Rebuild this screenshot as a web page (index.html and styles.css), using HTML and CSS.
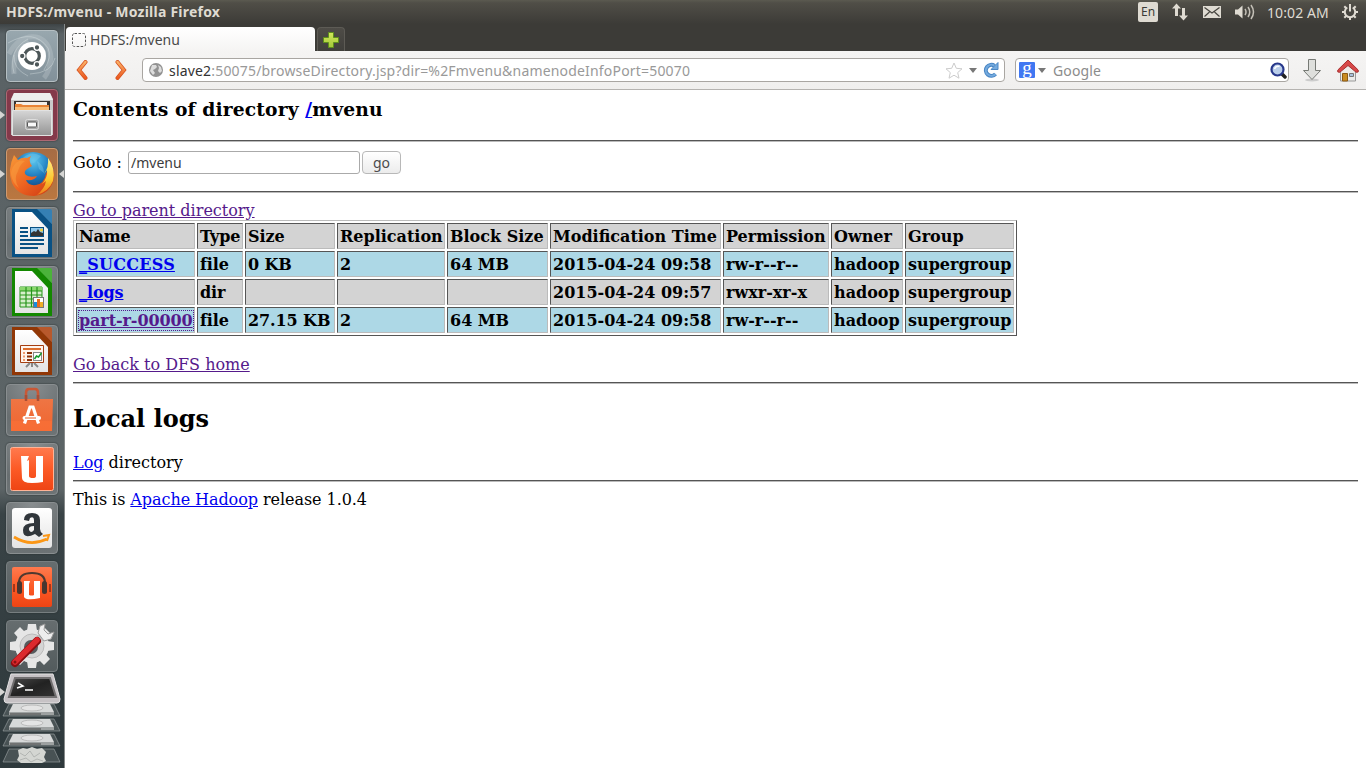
FILE: index.html
```html
<!DOCTYPE html>
<html lang="en">
<head>
<meta charset="utf-8">
<title>HDFS:/mvenu</title>
<link rel="stylesheet" href="styles.css">
</head>
<body>
<svg class="defs" width="0" height="0">
  <defs>
    <linearGradient id="orange" x1="0" y1="0" x2="0" y2="1"><stop offset="0" stop-color="#fbb066"/><stop offset="1" stop-color="#ec5a20"/></linearGradient>
    <linearGradient id="u1" x1="0" y1="0" x2="0" y2="1"><stop offset="0" stop-color="#ff7a4e"/><stop offset=".5" stop-color="#fc5a26"/><stop offset="1" stop-color="#ee4414"/></linearGradient>
    <linearGradient id="bag" x1="0" y1="0" x2="0" y2="1"><stop offset="0" stop-color="#ee7544"/><stop offset="1" stop-color="#f0652f"/></linearGradient>
    <linearGradient id="metal" x1="0" y1="0" x2="0" y2="1"><stop offset="0" stop-color="#d6d6d6"/><stop offset="1" stop-color="#949494"/></linearGradient>
    <linearGradient id="plus" x1="0" y1="0" x2="0" y2="1"><stop offset="0" stop-color="#d2e85a"/><stop offset="1" stop-color="#a2c63a"/></linearGradient>
    <linearGradient id="paper" x1="0" y1="0" x2="0" y2="1"><stop offset="0" stop-color="#fff"/><stop offset="1" stop-color="#e4e4e4"/></linearGradient>
    <radialGradient id="globe" cx=".5" cy=".2" r=".8"><stop offset="0" stop-color="#5cc8ee"/><stop offset=".5" stop-color="#1c78bd"/><stop offset="1" stop-color="#123468"/></radialGradient>
    <linearGradient id="fox" x1="0" y1="0" x2="1" y2="1"><stop offset="0" stop-color="#f79a38"/><stop offset=".5" stop-color="#ee6421"/><stop offset="1" stop-color="#c93512"/></linearGradient>
    <linearGradient id="tail" x1="0" y1="0" x2="0" y2="1"><stop offset="0" stop-color="#fff08a"/><stop offset=".6" stop-color="#fbc52c"/><stop offset="1" stop-color="#ee7a1e"/></linearGradient>
    <linearGradient id="screen" x1="0" y1="0" x2="1" y2="1"><stop offset="0" stop-color="#4a4a4a"/><stop offset=".5" stop-color="#222"/><stop offset="1" stop-color="#333"/></linearGradient>
  </defs>
</svg>
<header class="panel">
  <span class="panel-title">HDFS:/mvenu - Mozilla Firefox</span>
  <div class="indicators">
    <span class="lang">En</span>
    <svg class="ind-net" width="18" height="18" viewBox="0 0 18 18"><path d="M5.500.5L10 5.500H7V13H4V5.500H1z M12.500 17.500L8 12.500h3V5h3v7.500h3z" fill="#dfdbd2"/></svg>
    <svg class="ind-mail" width="18" height="12" viewBox="0 0 18 12"><rect width="18" height="12" fill="#dfdbd2"/><path d="M1.500 1.500L9 7l7.500-5.500M1.500 10.500L6.500 6M16.500 10.500L11.500 6" fill="none" stroke="#45433d" stroke-width="1.200"/></svg>
    <svg class="ind-vol" width="20" height="16" viewBox="0 0 20 16"><path d="M0 5.500h3L7.500 1.500v13L3 10.500H0z" fill="#dfdbd2"/><path d="M10 5q2 3 0 6M13 3q3.500 5 0 10M16 1q5 7 0 14" fill="none" stroke="#c4c0b7" stroke-width="1.500"/></svg>
    <span class="clock">10:02 AM</span>
    <svg class="ind-gear" width="16" height="16" viewBox="0 0 16 16" fill="none" stroke="#dfdbd2"><path d="M5.300 3.500A5.200 5.200 0 1 0 10.700 3.500" stroke-width="2"/><path d="M8 0v7.500" stroke-width="2"/><path d="M0 8h3M13 8h3M8 13v3M2.300 2.300l2 2M13.700 2.300l-2 2M2.300 13.700l2-2M13.700 13.700l-2-2" stroke-width="2"/></svg>
  </div>
</header>
<div class="desktop">
  <aside class="launcher">
    <div class="tile dash"><svg viewBox="0 0 52 52"><g fill="none" stroke="#cfd9dc" stroke-opacity=".28" stroke-width="5"><path d="M3 24Q13 5 30 7Q43 10 45 27Q44 41 38 48M8 44Q6 18 22 10"/></g><g fill="none" stroke="#e5edef" stroke-opacity=".35"><path d="M2 13Q28-2 42 18Q46 27 38 40M8 43Q2 20 22 9M22 46Q7 39 8 25M49 28Q46 43 24 44"/></g><circle cx="26" cy="26" r="14" fill="#fff"/><circle cx="26" cy="26" r="7.300" fill="none" stroke="#4c5658" stroke-width="3.200"/><g stroke="#fff" stroke-width="1.300" fill="#4c5658"><circle cx="16.200" cy="26" r="2.800"/><circle cx="31" cy="17.500" r="2.800"/><circle cx="31" cy="34.500" r="2.800"/></g></svg></div>
    <div class="tile files running"><svg viewBox="0 0 52 52"><path d="M8 4h36l3 6v36H5V10z" fill="#c9c9c9"/><path d="M8 4h36l3 7H5z" fill="#eee"/><path d="M8 12h36v11H8z" fill="#373332"/><path d="M10 13h31v7H10z" fill="#f4eee8"/><path d="M9 15h6l2 1h26v6H9z" fill="#e98436"/><path d="M9 18h34v3H9z" fill="#f9bd77"/><path d="M6.500 21.500h39v25h-39z" fill="url(#metal)" stroke="#e2e2e2"/><rect x="19.500" y="30.500" width="13" height="10" rx="2" fill="#aaa" stroke="#ddd"/><rect x="21.500" y="33" width="9" height="5" rx="1" fill="#fafafa" stroke="#555"/></svg></div>
    <div class="tile firefox running active"><svg viewBox="0 0 52 52"><circle cx="27" cy="25" r="21" fill="url(#globe)"/><path d="M17 10Q25 2 35 8L28 15Q22 17 17 10M31 13Q38 17 38 25L33 21z" fill="#70c6e8" opacity=".45"/><path d="M8 7L12 12Q16 9 21 10L25 8Q22 13 26 18L21 21Q17 24 20 27Q24 30 31 28Q29 33 20 32Q22 38 30 37Q38 36 40 26L43 18L44 12Q49 21 48 30Q45 46 28 48Q12 48 6 35Q1 22 8 7z" fill="url(#fox)"/><path d="M42 10Q50 21 47 33Q43 43 31 47Q39 40 40 33L36 36Q42 29 41 22L38 26Q43 19 42 10z" fill="url(#tail)"/><path d="M9 16Q13 11 19 13Q14 16 12 23Q7 31 13 40Q6 35 5 26Q5 21 9 16z" fill="#f99c3f" opacity=".55"/></svg></div>
    <div class="tile"><svg viewBox="0 0 52 52"><path d="M6 2h26l14 15v33H6z" fill="#095184"/><path d="M31 2h13q2 0 2 2v13z" fill="#3580b4"/><path d="M9 5h17l16 17v25H9z" fill="url(#paper)"/><path d="M14 21h8M14 25h8M14 29h8M14 33h24M14 37h24M14 41h18" stroke="#095184" stroke-width="2"/><rect x="24.500" y="20.500" width="13" height="9" fill="#8fc7ec" stroke="#095184"/><path d="M25 29v-3l3-2 2 1 2-3 2 3 3 1v3z" fill="#333"/><circle cx="35.500" cy="23" r="1.500" fill="#f4cf35"/></svg></div>
    <div class="tile"><svg viewBox="0 0 52 52"><path d="M6 2h26l14 15v33H6z" fill="#138800"/><path d="M31 2h13q2 0 2 2v13z" fill="#4bb33a"/><path d="M9 5h17l16 17v25H9z" fill="url(#paper)"/><path d="M14 21h22v20H14z" fill="#d6efcb" stroke="#26951b"/><path d="M14 21h22v4H14z" fill="#8bd76f"/><path d="M14 25h22M14 29h22M14 33h22M14 37h22M20 21v20M25.500 21v20M31 21v20" stroke="#26951b" stroke-width="1.200"/><rect x="27.500" y="31.500" width="10" height="10" fill="#fff" stroke="#777"/><path d="M28 41v-5h3v5z" fill="#168de0"/><path d="M31 41v-8h3v8z" fill="#ea6b1c"/><path d="M34 41v-5h3v5z" fill="#f0ae28"/></svg></div>
    <div class="tile"><svg viewBox="0 0 52 52"><path d="M6 2h26l14 15v33H6z" fill="#913706"/><path d="M31 2h13q2 0 2 2v13z" fill="#b8592c"/><path d="M9 5h17l16 17v25H9z" fill="url(#paper)"/><path d="M14.500 20.500h23v17h-23z" fill="#fff5ed" stroke="#a53e10"/><path d="M17 24h18" stroke="#dc6d2c" stroke-width="2"/><path d="M17 28h2M17 31.500h2M17 35h2" stroke="#ef9a6c" stroke-width="2"/><path d="M21 28h5M21 31.500h5M21 35h5" stroke="#8e3408" stroke-width="2"/><rect x="27.500" y="27.500" width="8" height="8" fill="#fff" stroke="#888"/><path d="M28.500 34l2-3 2 1 3-4" stroke="#159b2a" fill="none" stroke-width="1.500"/><path d="M26 38v4M24 38l-4 4M28 38l4 4" stroke="#888" stroke-width="2"/></svg></div>
    <div class="tile"><svg viewBox="0 0 52 52"><path d="M20 18V9q0-4 3-4h6q3 0 3 4v9" fill="none" stroke="#c95836" stroke-width="2.500"/><path d="M5 15h42l-1 32H5z" fill="url(#bag)"/><path d="M5 37h41v10H5z" fill="#fa7138" opacity=".7"/><path d="M20 11v6M32 11v6" stroke="#a94e35" stroke-width="2.500"/><path d="M18.500 39.500L24 23h3l5.500 16.500" fill="none" stroke="#fff" stroke-width="3.200"/><rect x="16.500" y="32" width="18.500" height="4" rx="2" fill="#fff"/><path d="M19 34h11" stroke="#e85f2b"/></svg></div>
    <div class="tile"><svg viewBox="0 0 52 52"><rect x="4.500" y="4.500" width="43" height="43" rx="2" fill="url(#u1)" stroke="#ffb497"/><path d="M15 13h8l-2 5 2-1v16q0 2 4 2 3 0 3-2V13h7v26q-5 1-11 1-10 0-10-5z" fill="#fff"/></svg></div>
    <div class="tile"><svg viewBox="0 0 52 52"><rect x="6" y="6" width="40" height="40" rx="3" fill="url(#paper)"/><path d="M18 18Q18 11 26 11Q34 11 34 18V27Q34 30 37 32L33 35L29 32Q17 38 17 28Q17 21 28 21V18Q28 14 24 16L23 19zM28 24Q22 24 23 28Q25 32 28 28z" fill="#30363b" fill-rule="evenodd"/><path d="M8 35Q24 45 41 37" fill="none" stroke="#fb9716" stroke-width="2.800"/><path d="M37 34l6-1-2 6" fill="none" stroke="#fb9716" stroke-width="2"/></svg></div>
    <div class="tile dim"><svg viewBox="0 0 52 52"><rect x="6" y="6" width="40" height="40" rx="2" fill="url(#u1)"/><path d="M13 25V22Q13 12 26 12Q39 12 39 22V25" fill="none" stroke="#4e3930" stroke-width="2.200"/><rect x="11" y="20" width="5" height="13" rx="2.500" fill="#483630"/><rect x="36" y="20" width="5" height="13" rx="2.500" fill="#483630"/><path d="M8 23v8M44 23v8" stroke="#842c18" stroke-width="1.500"/><path d="M18 20h6l-1 3v11q3 1 5 0V20h6v17q-14 3-16-1z" fill="#fff"/></svg></div>
    <div class="tile dim"><svg viewBox="0 0 52 52"><g fill="#e6e6e6"><circle cx="26" cy="26" r="17"/><path d="M22 4h8l1 7H21zM22 48h8l1-7H21zM4 22v8l7 1V21zM48 22v8l-7 1V21zM8 13l6-6 6 6-6 7zM44 13l-6-6-6 6 6 7zM8 39l6 6 6-6-6-7zM44 39l-6 6-6-6 6-7z"/></g><circle cx="26" cy="26" r="12" fill="#d5d5d5" stroke="#bbb"/><circle cx="25" cy="27" r="7" fill="#555b5d"/><path d="M29 22L38 13" stroke="#bdbdbd" stroke-width="5"/><path d="M32 13L34 6l5-2-1 6 4 4 6-2-3 7-7 2z" fill="#ededed" stroke="#999"/><path d="M9 43L31 21" stroke="#8c0d10" stroke-width="8" stroke-linecap="round"/><path d="M9 42L31 20" stroke="#dc292d" stroke-width="5.500" stroke-linecap="round"/><circle cx="9" cy="42" r="1.500" fill="#811"/></svg></div>
    <div class="stack running"><svg viewBox="0 0 62 96" width="62" height="96">
      <g fill="#798082" fill-opacity=".35" stroke="#a0a6a8" stroke-opacity=".6"><path d="M9 31h45l6 12H3zM9 46h45l6 12H3zM9 61h45l6 12H3zM9 76h45l6 13H3z"/></g>
      <g><path d="M13 31h37l4 8H9z" fill="#d7d9d9"/><path d="M9 39h45v3H9z" fill="#9da1a1"/><path d="M10 41h31" stroke="#444"/><ellipse cx="32" cy="35" rx="11" ry="3" fill="#e4e4e4" stroke="#bbb"/></g>
      <g transform="translate(0 15)"><path d="M13 31h37l4 8H9z" fill="#d7d9d9"/><path d="M9 39h45v3H9z" fill="#9da1a1"/><path d="M10 41h31" stroke="#444"/><ellipse cx="32" cy="35" rx="11" ry="3" fill="#e4e4e4" stroke="#bbb"/></g>
      <g transform="translate(0 30)"><path d="M13 31h37l4 8H9z" fill="#d7d9d9"/><path d="M9 39h45v3H9z" fill="#9da1a1"/><path d="M10 41h31" stroke="#444"/><ellipse cx="32" cy="35" rx="11" ry="3" fill="#e4e4e4" stroke="#bbb"/></g>
      <path d="M18 77l5-2 4 1 5-2 5 2 5-1 4 4-2 5 2 4-4 2H21l-4-3 2-4z" fill="#d4d6d2"/><path d="M20 80l5 3 5-5 4 6 6-4M20 87l6-2 5 4 6-3 6 2" stroke="#b2b5b2" fill="none"/>
      <path d="M11 1h42l7 25q0 4-3 4H7q-3 0-3-4z" fill="#c6c2c5" stroke="#e4e2e3"/><path d="M15 5h35l6 19H9z" fill="url(#screen)" stroke="#716f70" stroke-width="2"/><path d="M18 10l5 3-6 2M25 17h8" fill="none" stroke="#fff" stroke-width="1.500"/>
    </svg></div>
  </aside>
  <main class="browser">
    <div class="tabs">
      <div class="tab"><svg width="14" height="14"><rect x=".5" y=".5" width="13" height="13" rx="2" fill="none" stroke="#555" stroke-dasharray="2.500 1.500"/></svg><span class="tab-label">HDFS:/mvenu</span></div>
      <div class="newtab"><svg width="16" height="16" viewBox="0 0 16 16"><path d="M5.500.5h5v5h5v5h-5v5h-5v-5h-5v-5h5z" fill="url(#plus)" stroke="#5e8f1c"/></svg></div>
    </div>
    <nav class="toolbar">
      <svg class="back" width="12" height="20" viewBox="0 0 12 20"><path d="M9.500 2L3 10l6.500 8" fill="none" stroke="#d5521f" stroke-width="4" stroke-linecap="round"/><path d="M9.500 2L3 10l6.500 8" fill="none" stroke="url(#orange)" stroke-width="2.500" stroke-linecap="round"/></svg>
      <svg class="forward" width="12" height="20" viewBox="0 0 12 20"><path d="M2.500 2L9 10l-6.500 8" fill="none" stroke="#d5521f" stroke-width="4" stroke-linecap="round"/><path d="M2.500 2L9 10l-6.500 8" fill="none" stroke="url(#orange)" stroke-width="2.500" stroke-linecap="round"/></svg>
      <div class="field urlbar">
        <svg width="14" height="14" viewBox="0 0 14 14"><circle cx="7" cy="7" r="7" fill="#929292"/><path d="M3 2l4 0 1 2-2 2-2 1 2 3-2 2-3-4zM9 2l3 2 1 4-2 2-2-2 1-3z" fill="#ddd"/></svg>
        <span class="url"><b>slave2</b>:50075/browseDirectory.jsp?dir=%2Fmvenu&amp;namenodeInfoPort=50070</span>
        <svg class="star" width="18" height="17" viewBox="0 0 18 17"><path d="M9 1l2.300 5.300 5.700.5-4.300 3.800 1.300 5.600L9 13.200 4 16.200l1.300-5.600L1 6.800l5.700-.5z" fill="#fff" stroke="#ccc"/></svg>
        <svg width="8" height="5"><path d="M0 0h8L4 5z" fill="#777"/></svg>
        <svg class="reload" width="16" height="16" viewBox="0 0 16 16"><path d="M12.500 12A5.500 5.500 0 1 1 11.500 3.800" fill="none" stroke="#4a86c4" stroke-width="4"/><path d="M12.500 12A5.500 5.500 0 1 1 11.500 3.800" fill="none" stroke="#74aade" stroke-width="2"/><path d="M15 .5v7H8z" fill="#74aade" stroke="#4a86c4"/></svg>
      </div>
      <div class="field search">
        <span class="google">g</span>
        <svg width="8" height="5"><path d="M0 0h8L4 5z" fill="#777"/></svg>
        <span class="hint">Google</span>
        <svg width="17" height="17" viewBox="0 0 17 17"><path d="M11.500 11.500l3.500 3.500" stroke="#222" stroke-width="3.500" stroke-linecap="round"/><circle cx="7.500" cy="7.500" r="6" fill="#b9cdea" stroke="#27378b" stroke-width="2.200"/><path d="M4.500 7q1.500-3.500 5-2.500" fill="none" stroke="#fff" stroke-width="1.500"/></svg>
      </div>
      <svg class="download" width="18" height="23" viewBox="0 0 18 23"><ellipse cx="9" cy="21" rx="7" ry="1.500" fill="#ccc"/><path d="M5.500.5h7v11h5L9 20.500.5 11.500h5z" fill="#dedfdc" stroke="#777a75"/></svg>
      <svg class="home" width="22" height="23" viewBox="0 0 22 23"><path d="M3.500 11v11h15V11L11 3z" fill="#ececea" stroke="#999"/><path d="M5.500 14.500h5V22h-5z" fill="#c98c22" stroke="#8c5a14"/><path d="M12.500 14.500h4v3h-4z" fill="#a9c1dc" stroke="#777"/><path d="M11 1L.8 11v2l2 .3L11 6.500l8.200 6.800 2-.3v-2z" fill="#d74848" stroke="#a83030"/></svg>
    </nav>
    <section class="page">
      <h3>Contents of directory <a class="new" href="#">/</a>mvenu</h3>
      <hr>
      <form class="goto"><span>Goto : </span><input type="text" value="/mvenu"><button type="button">go</button></form>
      <hr>
      <a class="seen" href="#">Go to parent directory</a>
      <table>
        <colgroup><col class="c-name"><col class="c-type"><col class="c-size"><col class="c-repl"><col class="c-block"><col class="c-time"><col class="c-perm"><col class="c-owner"><col class="c-group"></colgroup>
        <tr class="alt"><td>Name</td><td>Type</td><td>Size</td><td>Replication</td><td>Block Size</td><td>Modification Time</td><td>Permission</td><td>Owner</td><td>Group</td></tr>
        <tr><td><a class="new success" href="#">_SUCCESS</a></td><td>file</td><td>0 KB</td><td>2</td><td>64 MB</td><td>2015-04-24 09:58</td><td>rw-r--r--</td><td>hadoop</td><td>supergroup</td></tr>
        <tr class="alt"><td><a class="new" href="#">_logs</a></td><td>dir</td><td></td><td></td><td></td><td>2015-04-24 09:57</td><td>rwxr-xr-x</td><td>hadoop</td><td>supergroup</td></tr>
        <tr><td><a class="seen focus" href="#">part-r-00000</a></td><td>file</td><td>27.15 KB</td><td>2</td><td>64 MB</td><td>2015-04-24 09:58</td><td>rw-r--r--</td><td>hadoop</td><td>supergroup</td></tr>
      </table>
      <p class="homelink"><a class="seen" href="#">Go back to DFS home</a></p>
      <hr>
      <h2>Local logs</h2>
      <p><a class="new" href="#">Log</a> directory</p>
      <hr>
      <p class="release">This is <a class="new" href="#">Apache Hadoop</a> release 1.0.4</p>
    </section>
  </main>
</div>
</body>
</html>
```
FILE: styles.css
```css
* { box-sizing: border-box; }
body { margin: 0; width: 1366px; height: 768px; overflow: hidden; background: #fff; font-family: "Noto Sans", sans-serif; font-size: 14px; }
.defs { display: block; position: absolute; }
svg { display: block; flex: none; }
.panel { height: 24px; display: flex; justify-content: space-between; align-items: center; background: linear-gradient(#5b5a50, #504e47 12%, #3c3b37); color: #dfdbd2; padding: 0 8px 0 6px; }
.panel-title { font-weight: bold; font-size: 14px; letter-spacing: .23px; line-height: 24px; white-space: nowrap; }
.indicators { display: flex; align-items: center; height: 24px; }
.lang { width: 20px; height: 20px; border-radius: 2px; background: #dfdbd2; color: #3c3b37; font-size: 12px; line-height: 20px; text-align: center; }
.ind-net { margin-left: 13px; }
.ind-mail { margin-left: 14px; }
.ind-vol { margin-left: 14px; }
.clock { width: 62px; margin-left: 12px; white-space: nowrap; font-size: 14px; letter-spacing: .1px; }
.ind-gear { margin-left: 13px; }

.desktop { display: flex; height: 744px; }
.launcher { width: 65px; flex: none; padding: 6px 0 0 6px; display: flex; flex-direction: column; gap: 7px; border-right: 1px solid #858989; background: linear-gradient(#3e4446, #5a6265 10px, #5c6466 465px, #394346 490px, #2e393c); overflow: hidden; }
.tile { width: 52px; height: 52px; flex: none; border-radius: 4px; border: 1px solid #898e90; background: radial-gradient(circle at 50% 0, #898e90, #686e70 70%, #6e7476); position: relative; box-shadow: 0 0 1px 1px rgba(40, 45, 47, .3); }
.tile svg { width: 52px; height: 52px; margin: -1px; }
.dash { background: linear-gradient(#98a7ae, #82919a); border-color: #b5bfc3; }
.files { background: #84394a; border-color: #ad6873; }
.firefox { background: linear-gradient(#a66c44, #ba7740); border-color: #cf9a70; }
.dim { background: linear-gradient(#666d6f, #535b5d); border-color: #777e80; }
.running::before { content: ""; position: absolute; left: -7px; top: 21px; border: 4px solid transparent; border-left: 5px solid #d5d5d3; border-right: 0; }
.active::after { content: ""; position: absolute; right: -7px; top: 21px; border: 4px solid transparent; border-right: 5px solid #d5d5d3; border-left: 0; }
.stack { position: relative; width: 62px; height: 96px; margin: -6px 0 0 -6px; flex: none; }
.stack.running::before { left: 0; top: 15px; }

.browser { flex: 1; min-width: 0; background: #fff; }
.tabs { height: 27px; background: #3c3b37; display: flex; padding: 3px 0 0 1px; gap: 2px; }
.tab { width: 249px; height: 24px; border-radius: 4px 4px 0 0; background: linear-gradient(#fff, #f5f4f3); display: flex; align-items: center; gap: 4px; padding-left: 5px; color: #4a4a4a; border: 1px solid #fff; border-bottom: 0; }
.tab-label { font-size: 14px; }
.newtab { width: 28px; height: 24px; border: 1px solid #5d5b55; border-bottom: 0; border-radius: 4px 4px 0 0; background: linear-gradient(#4e4c47, #403f3b); display: flex; align-items: center; justify-content: center; }
.toolbar { height: 39px; background: linear-gradient(#f5f4f3, #f0efee); border-bottom: 1px solid #b5b3b0; display: flex; align-items: center; padding-left: 11px; }
.forward { margin-left: 27px; }
.field { height: 24px; background: #fff; border: 1px solid #a9a6a2; border-radius: 4px; display: flex; align-items: center; }
.urlbar { width: 863px; margin-left: 15px; padding: 0 5px 0 6px; }
.url { flex: 1; margin-left: 6px; color: #999; white-space: nowrap; letter-spacing: .18px; }
.url b { font-weight: normal; color: #333; }
.star { margin-right: 6px; }
.reload { margin-left: 6px; }
.search { width: 274px; margin-left: 10px; padding: 0 1px 0 3px; }
.google { width: 16px; height: 16px; border-radius: 1px; background: #4077f2; color: #fff; font: 19px/11px "Liberation Serif", serif; text-align: center; margin-right: 3px; }
.hint { flex: 1; margin-left: 7px; color: #8c8c8c; letter-spacing: .15px; }
.download { margin-left: 14px; }
.home { margin-left: 16px; }

.page { padding: 0 8px; font: 16px/19px "DejaVu Serif", serif; color: #000; }
.page h3 { margin: 0 0 19px; padding-top: 8px; font-size: 18.720px; line-height: 23px; letter-spacing: .13px; }
.page h2 { margin: 21px 0 20px; font-size: 24px; line-height: 28px; }
.page hr { height: 2px; margin: 8px 0; border: 0; border-top: 1px solid #555; border-bottom: 1px solid #bbb; }
.page p { margin: 0; }
.page .homelink { margin-top: 19px; }
.page .release { letter-spacing: -.06px; }
.new { color: #00e; }
.seen { color: #551a8b; }
.page .goto { display: flex; align-items: center; height: 25px; margin-bottom: 16px; white-space: pre; }
.goto input { width: 232px; height: 23px; margin-left: 1px; border: 1px solid #aaa; border-radius: 3px; padding: 0 2px; font: 14px "Noto Sans", sans-serif; color: #3c3c3c; }
.goto button { width: 39px; height: 23px; margin-left: 2px; border: 1px solid #b8b8b8; border-radius: 4px; background: linear-gradient(#fff, #ececec); padding: 0; font: 14px "Noto Sans", sans-serif; color: #4c4c4c; }
.page table { width: 944px; table-layout: fixed; border: 1px solid; border-color: #bbb #555 #555 #bbb; border-spacing: 2px; font-weight: bold; }
.c-name { width: 119px; }
.c-type { width: 46px; }
.c-size { width: 90px; }
.c-repl { width: 108px; }
.c-block { width: 101px; }
.c-time { width: 171px; }
.c-perm { width: 106px; }
.c-owner { width: 72px; }
.c-group { width: 109px; }
.page td { height: 26px; padding: 2px; border: 1px solid; border-color: #555 #bbb #bbb #555; background: #add8e6; white-space: nowrap; }
.page .alt td { background: #d3d3d3; }
.page td:nth-child(-n+3) { letter-spacing: -.1px; }
.page .success { letter-spacing: .25px; }
.focus { outline: 1px dotted #551a8b; }
```
